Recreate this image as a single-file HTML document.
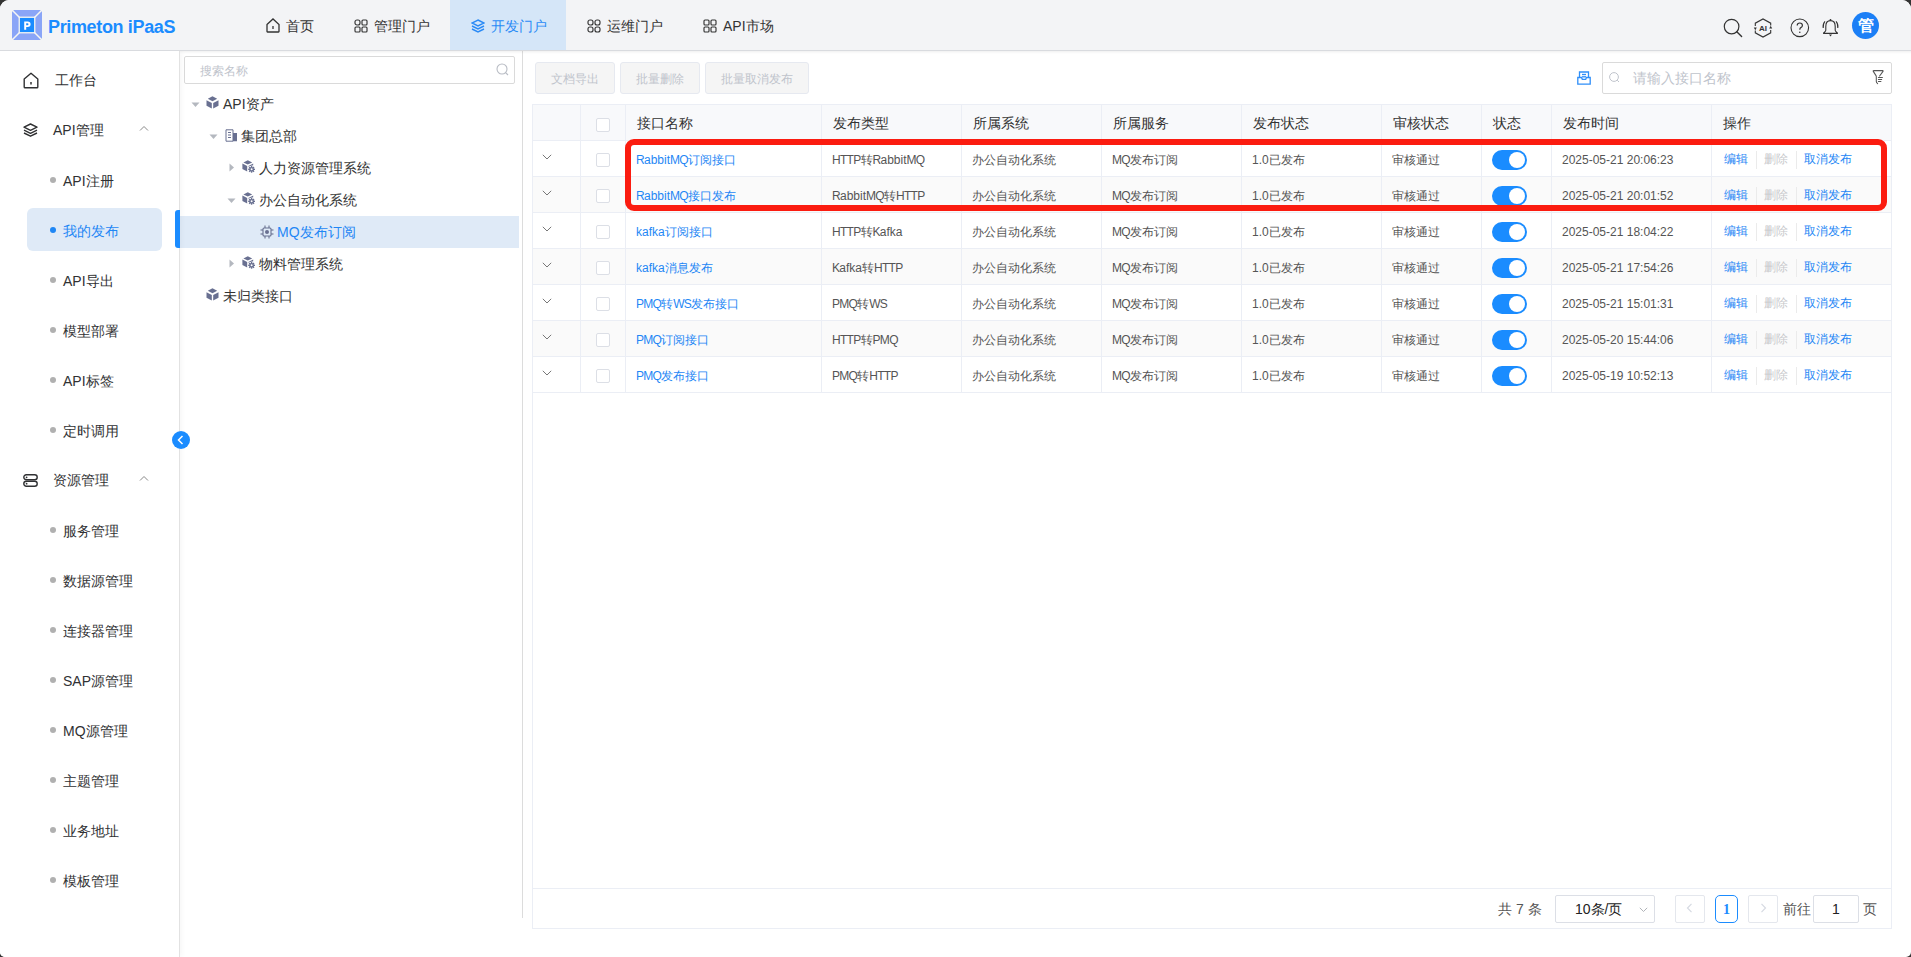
<!DOCTYPE html>
<html><head><meta charset="utf-8">
<style>
*{box-sizing:border-box;margin:0;padding:0}
html,body{width:1911px;height:957px;overflow:hidden;background:#333}
body{font-family:"Liberation Sans",sans-serif;color:#303133;position:relative}
.app{position:absolute;left:0;top:0;width:1911px;height:957px;background:#fff;border-radius:9px 9px 5px 5px;overflow:hidden}
.abs{position:absolute}
.hdr{position:absolute;left:0;top:0;width:1911px;height:51px;background:#f3f4f6;border-bottom:1px solid #d9dbdf;box-shadow:0 1px 3px rgba(0,0,0,0.06);z-index:3;box-shadow:none}
.logo{position:absolute;left:12px;top:10px;width:30px;height:30px}
.brand{position:absolute;left:48px;top:17px;font-size:18px;line-height:20px;font-weight:bold;color:#1b8cff;letter-spacing:-0.35px}
.nav{position:absolute;top:0;height:50px;display:flex;align-items:center;font-size:14px;color:#333;padding-top:3px}
.nav svg{margin-right:6px;position:relative;top:-1px}
.nav.active{background:#d5e6f8;color:#2b8bf6}
.ticon{position:absolute}
.side{position:absolute;left:0;top:51px;width:180px;height:906px;border-right:1px solid #e2e2e2;background:#fff;box-shadow:2px 0 5px rgba(0,0,0,0.035);z-index:2}
.sitem{position:absolute;left:0;width:180px;height:20px;font-size:14px;color:#303133;line-height:20px}
.dot{position:absolute;left:50px;top:7px;width:6px;height:6px;border-radius:50%;background:#b0b0b0}
.tree{position:absolute;left:180px;top:51px;width:343px;height:867px;border-right:1px solid #dcdcdc}
.titem{position:absolute;left:0;height:32px;width:339px;font-size:14px;color:#333;line-height:32px}
.main{position:absolute;left:523px;top:51px;right:0;bottom:0}
.btn{position:absolute;top:11px;height:32px;border:1px solid #e6e9f0;background:#f5f5f5;border-radius:3px;font-size:12px;color:#c0c4cc;line-height:30px;padding-top:1px;text-align:center}
table{border-collapse:collapse;table-layout:fixed;position:absolute;left:532px;top:104px}
td,th{border:1px solid #ebeef5;height:36px;font-size:12px;color:#555;text-align:left;padding:3px 0 0 10px;font-weight:normal;white-space:nowrap}
th{background:#f8f9fb;font-size:14px;color:#333;padding-left:11px}
tr.g td{background:#fafafa}
.lnk{color:#1f87f5}
.cb{display:inline-block;width:14px;height:14px;border:1px solid #dcdfe6;border-radius:2px;background:#fff;vertical-align:middle}
.sw{display:inline-block;width:35px;height:20px;border-radius:10px;background:#1a8cff;position:relative;vertical-align:middle;top:0px}
.sw:after{content:"";position:absolute;right:2px;top:2px;width:16px;height:16px;border-radius:50%;background:#fff}
.ops span{display:inline-block}
i.uc{font-style:normal;letter-spacing:-0.7px}
.sep{display:inline-block;width:1px;height:18px;background:#ebebeb;vertical-align:middle;margin:0 7px 0 8px}
</style></head><body>
<div class="app">
<!-- HEADER -->
<div class="hdr">
  <svg class="logo" viewBox="0 0 30 30"><rect x="0" y="0" width="30" height="30" rx="2.2" fill="#8aa5f7"/><g stroke="#f6f6f2" stroke-width="1.5"><line x1="-1" y1="-1" x2="8" y2="8"/><line x1="31" y1="-1" x2="22" y2="8"/><line x1="-1" y1="31" x2="8" y2="22"/><line x1="31" y1="31" x2="22" y2="22"/></g><rect x="6.6" y="6.6" width="16.8" height="16.8" fill="#f6f6f2"/><rect x="7.9" y="7.9" width="14.2" height="14.2" fill="#1a8cff"/><path d="M12.2 19.8 V11.6 H15.6 Q18.6 11.6 18.6 14.3 Q18.6 17 15.6 17 H14.2 V19.8 Z M14.2 13.3 V15.3 H15.3 Q16.5 15.3 16.5 14.3 Q16.5 13.3 15.3 13.3 Z" fill="#fff" fill-rule="evenodd"/></svg>
  <div class="brand">Primeton iPaaS</div>
  <div class="nav" style="left:246px;width:88px;padding-left:20px">
    <svg width="14" height="15" viewBox="0 0 14 15"><path d="M1 6.5 L7 1 L13 6.5 V13.5 Q13 14 12.5 14 H1.5 Q1 14 1 13.5 Z" fill="none" stroke="#333" stroke-width="1.3"/><line x1="7" y1="8" x2="7" y2="11" stroke="#333" stroke-width="1.3"/></svg>首页</div>
  <div class="nav" style="left:334px;width:116px;padding-left:20px">
    <svg width="14" height="14" viewBox="0 0 14 14"><g fill="none" stroke="#333" stroke-width="1.15"><rect x="1" y="1" width="5" height="5" rx="2"/><rect x="8" y="1" width="5" height="5" rx="1"/><rect x="1" y="8" width="5" height="5" rx="1"/><rect x="8" y="8" width="5" height="5" rx="1"/></g></svg>管理门户</div>
  <div class="nav active" style="left:450px;width:116px;padding-left:21px">
    <svg width="14" height="14" viewBox="0 0 14 14"><g fill="none" stroke="#2b8bf6" stroke-width="1.4"><path d="M7 1 L13 4 L7 7 L1 4 Z"/><path d="M1 7 L7 10 L13 7"/><path d="M1 10 L7 13 L13 10"/></g></svg>开发门户</div>
  <div class="nav" style="left:567px;width:116px;padding-left:20px">
    <svg width="14" height="14" viewBox="0 0 14 14"><g fill="none" stroke="#333" stroke-width="1.15"><rect x="1" y="1" width="5" height="5" rx="2"/><rect x="8" y="1" width="5" height="5" rx="2"/><rect x="1" y="8" width="5" height="5" rx="2"/><rect x="8" y="8" width="5" height="5" rx="2"/></g></svg>运维门户</div>
  <div class="nav" style="left:683px;width:110px;padding-left:20px">
    <svg width="14" height="14" viewBox="0 0 14 14"><g fill="none" stroke="#333" stroke-width="1.15"><rect x="1" y="1" width="5" height="5" rx="1"/><rect x="8" y="1" width="5" height="5" rx="1"/><rect x="1" y="8" width="5" height="5" rx="1"/><rect x="8" y="8" width="5" height="5" rx="1"/></g></svg>API市场</div>
  <!-- right icons -->
  <svg class="ticon" style="left:1723px;top:18px" width="20" height="20" viewBox="0 0 20 20"><circle cx="8.6" cy="8.6" r="7.3" fill="none" stroke="#333" stroke-width="1.2"/><line x1="13.8" y1="13.8" x2="18.6" y2="18.6" stroke="#333" stroke-width="1.4" stroke-linecap="round"/></svg>
  <svg class="ticon" style="left:1753px;top:18px" width="20" height="20" viewBox="0 0 20 20"><g fill="none" stroke="#333" stroke-width="1.1"><path d="M2.3 8 V5.2 L10 1 L17.7 5.2 V7.5"/><path d="M17.7 12 V14.8 L10 19 L2.3 14.8 V12.5"/></g><path d="M0.8 9.5 L2.3 12.3 L3.8 9.5 Z" fill="#333"/><path d="M16.2 10.5 L17.7 7.7 L19.2 10.5 Z" fill="#333"/><text x="10" y="12.6" font-size="8" font-weight="bold" text-anchor="middle" fill="#333" font-family="Liberation Sans">AI</text></svg>
  <svg class="ticon" style="left:1790px;top:18px" width="20" height="20" viewBox="0 0 20 20"><circle cx="9.8" cy="9.8" r="8.8" fill="none" stroke="#333" stroke-width="1.1"/><path d="M7.2 7.6 Q7.2 5 9.8 5 Q12.4 5 12.4 7.4 Q12.4 8.8 10.8 9.6 Q9.8 10.1 9.8 11.8" fill="none" stroke="#333" stroke-width="1.2"/><circle cx="9.8" cy="14.3" r="0.8" fill="#333"/></svg>
  <svg class="ticon" style="left:1821px;top:18px" width="19" height="20" viewBox="0 0 19 20"><g fill="none" stroke="#333" stroke-width="1.1" stroke-linejoin="round"><path d="M9.5 2.6 C6.3 2.6 4.8 5.4 4.8 8.4 V12.3 C4.8 13.4 3.6 14 2.6 15 V15.4 H16.4 V15 C15.4 14 14.2 13.4 14.2 12.3 V8.4 C14.2 5.4 12.7 2.6 9.5 2.6 Z"/><path d="M2.2 10 Q1.6 6 4 3.4"/><path d="M16.8 10 Q17.4 6 15 3.4"/></g><circle cx="9.5" cy="1.8" r="0.9" fill="#333"/><path d="M8 16.6 H11 L9.5 18.4 Z" fill="#333"/></svg>
  <div class="abs" style="left:1852px;top:12px;width:27px;height:27px;border-radius:50%;background:#1b7ff6;color:#fff;font-size:16px;font-weight:bold;text-align:center;line-height:27px">管</div>
</div>

<div class="abs" style="left:180px;top:51px;width:1731px;height:3px;background:linear-gradient(rgba(0,0,0,0.05),rgba(0,0,0,0));z-index:1"></div>
<!-- SIDEBAR -->
<div class="side">
<div class="abs" style="left:27px;top:157px;width:135px;height:43px;border-radius:6px;background:#dfeaf7"></div>
<div class="sitem" style="top:19px"><svg class="abs" style="left:23px;top:2px" width="16" height="17" viewBox="0 0 16 17"><path d="M1.2 7 L8 1.2 L14.8 7 V15 Q14.8 15.8 14 15.8 H2 Q1.2 15.8 1.2 15 Z" fill="none" stroke="#303133" stroke-width="1.4" stroke-linejoin="round"/><line x1="8" y1="10" x2="8" y2="12.5" stroke="#303133" stroke-width="1.5"/></svg><span class="abs" style="left:55px;top:0">工作台</span></div>
<div class="sitem" style="top:69px"><svg class="abs" style="left:23px;top:3px" width="15" height="14" viewBox="0 0 15 14"><g fill="none" stroke="#303133" stroke-width="1.4" stroke-linejoin="round"><path d="M7.5 1 L14 4.2 L7.5 7.4 L1 4.2 Z"/><path d="M1 7.2 L7.5 10.4 L14 7.2"/><path d="M1 10 L7.5 13.2 L14 10"/></g></svg><span class="abs" style="left:53px;top:0">API管理</span><svg class="abs" style="left:139px;top:5px" width="10" height="7" viewBox="0 0 10 7"><path d="M1 5.5 L5 1.5 L9 5.5" fill="none" stroke="#888" stroke-width="1"/></svg></div>
<div class="sitem" style="top:119px;"><div class="dot"></div><span class="abs" style="left:63px;top:1px">API注册</span></div>
<div class="sitem" style="top:169px;color:#1f87f5;"><div class="dot" style="background:#1f87f5"></div><span class="abs" style="left:63px;top:1px">我的发布</span></div>
<div class="sitem" style="top:219px;"><div class="dot"></div><span class="abs" style="left:63px;top:1px">API导出</span></div>
<div class="sitem" style="top:269px;"><div class="dot"></div><span class="abs" style="left:63px;top:1px">模型部署</span></div>
<div class="sitem" style="top:319px;"><div class="dot"></div><span class="abs" style="left:63px;top:1px">API标签</span></div>
<div class="sitem" style="top:369px;"><div class="dot"></div><span class="abs" style="left:63px;top:1px">定时调用</span></div>
<div class="sitem" style="top:419px"><svg class="abs" style="left:23px;top:4px" width="15" height="13" viewBox="0 0 15 13"><g fill="none" stroke="#303133" stroke-width="1.4"><rect x="0.8" y="0.8" width="13.4" height="5" rx="2.5"/><rect x="0.8" y="7.2" width="13.4" height="5" rx="2.5"/></g><circle cx="3.6" cy="3.3" r="0.9" fill="#303133"/><circle cx="3.6" cy="9.7" r="0.9" fill="#303133"/></svg><span class="abs" style="left:53px;top:0">资源管理</span><svg class="abs" style="left:139px;top:5px" width="10" height="7" viewBox="0 0 10 7"><path d="M1 5.5 L5 1.5 L9 5.5" fill="none" stroke="#888" stroke-width="1"/></svg></div>
<div class="sitem" style="top:469px;"><div class="dot"></div><span class="abs" style="left:63px;top:1px">服务管理</span></div>
<div class="sitem" style="top:519px;"><div class="dot"></div><span class="abs" style="left:63px;top:1px">数据源管理</span></div>
<div class="sitem" style="top:569px;"><div class="dot"></div><span class="abs" style="left:63px;top:1px">连接器管理</span></div>
<div class="sitem" style="top:619px;"><div class="dot"></div><span class="abs" style="left:63px;top:1px">SAP源管理</span></div>
<div class="sitem" style="top:669px;"><div class="dot"></div><span class="abs" style="left:63px;top:1px">MQ源管理</span></div>
<div class="sitem" style="top:719px;"><div class="dot"></div><span class="abs" style="left:63px;top:1px">主题管理</span></div>
<div class="sitem" style="top:769px;"><div class="dot"></div><span class="abs" style="left:63px;top:1px">业务地址</span></div>
<div class="sitem" style="top:819px;"><div class="dot"></div><span class="abs" style="left:63px;top:1px">模板管理</span></div>
<div class="abs" style="left:172px;top:380px;width:18px;height:18px;border-radius:50%;background:#1b8cff;z-index:5"><svg width="18" height="18" viewBox="0 0 18 18"><path d="M10.5 5 L6.5 9 L10.5 13" fill="none" stroke="#fff" stroke-width="1.5"/></svg></div>
</div>

<!-- TREE -->
<div class="tree">
<div class="abs" style="left:4px;top:5px;width:331px;height:28px;border:1px solid #dadada;border-radius:2px;background:#fff"><span class="abs" style="left:15px;top:6px;font-size:12px;color:#c0c4cc;line-height:16px">搜索名称</span><svg class="abs" style="left:311px;top:6px" width="13" height="13" viewBox="0 0 13 13"><circle cx="6" cy="6" r="5" fill="none" stroke="#b8bcc4" stroke-width="1.1"/><line x1="9.6" y1="9.6" x2="12" y2="12" stroke="#b8bcc4" stroke-width="1.1"/></svg></div>
<div class="titem" style="top:37px;"><svg class="abs" style="left:11px;top:14px" width="9" height="6" viewBox="0 0 9 6"><path d="M0.5 0.5 H8.5 L4.5 5 Z" fill="#b4b8bf"/></svg><svg class="abs" style="left:26px;top:8px" width="13" height="13" viewBox="0 0 13 13"><path d="M6.5 0.3 L11.2 2.8 L6.5 5.3 L1.8 2.8 Z" fill="#697091"/><path d="M0.5 4.2 L5.8 7 V12.6 L0.5 9.8 Z" fill="#697091"/><path d="M12.5 4.2 L7.2 7 V12.6 L12.5 9.8 Z" fill="#697091"/></svg><span class="abs" style="left:43px;top:0">API资产</span></div>
<div class="titem" style="top:69px;"><svg class="abs" style="left:29px;top:14px" width="9" height="6" viewBox="0 0 9 6"><path d="M0.5 0.5 H8.5 L4.5 5 Z" fill="#b4b8bf"/></svg><svg class="abs" style="left:45px;top:9px" width="13" height="13" viewBox="0 0 13 13"><path d="M1 0.8 H8 V12.2 H1 Z" fill="none" stroke="#697091" stroke-width="1"/><path d="M8 4 H12 V12.2 H8" fill="#697091"/><line x1="3" y1="3.5" x2="6" y2="3.5" stroke="#697091" stroke-width="1.1"/><line x1="3" y1="6" x2="6" y2="6" stroke="#697091" stroke-width="1.1"/><line x1="3" y1="8.5" x2="6" y2="8.5" stroke="#697091" stroke-width="1.1"/></svg><span class="abs" style="left:61px;top:0">集团总部</span></div>
<div class="titem" style="top:101px;"><svg class="abs" style="left:49px;top:11px" width="6" height="9" viewBox="0 0 6 9"><path d="M0.5 0.5 V8.5 L5 4.5 Z" fill="#b4b8bf"/></svg><svg class="abs" style="left:62px;top:8px" width="13" height="13" viewBox="0 0 13 13"><path d="M5.8 0.2 L10.2 2.4 L5.8 4.6 L1.4 2.4 Z" fill="#697091"/><path d="M0.4 3.5 L5.2 5.9 V11.4 L0.4 9 Z" fill="#697091"/><path d="M11.2 3.5 L6.4 5.9 V6.8 L11.2 5.2 Z" fill="#697091"/><circle cx="9.6" cy="9.3" r="3.6" fill="#fff"/><circle cx="9.6" cy="9.3" r="2.4" fill="#697091"/><rect x="8.90" y="5.90" width="1.4" height="1.6" transform="rotate(0 9.6 9.3)" fill="#697091"/><rect x="8.90" y="5.90" width="1.4" height="1.6" transform="rotate(45 9.6 9.3)" fill="#697091"/><rect x="8.90" y="5.90" width="1.4" height="1.6" transform="rotate(90 9.6 9.3)" fill="#697091"/><rect x="8.90" y="5.90" width="1.4" height="1.6" transform="rotate(135 9.6 9.3)" fill="#697091"/><rect x="8.90" y="5.90" width="1.4" height="1.6" transform="rotate(180 9.6 9.3)" fill="#697091"/><rect x="8.90" y="5.90" width="1.4" height="1.6" transform="rotate(225 9.6 9.3)" fill="#697091"/><rect x="8.90" y="5.90" width="1.4" height="1.6" transform="rotate(270 9.6 9.3)" fill="#697091"/><rect x="8.90" y="5.90" width="1.4" height="1.6" transform="rotate(315 9.6 9.3)" fill="#697091"/><circle cx="9.6" cy="9.3" r="1" fill="#fff"/></svg><span class="abs" style="left:79px;top:0">人力资源管理系统</span></div>
<div class="titem" style="top:133px;"><svg class="abs" style="left:47px;top:14px" width="9" height="6" viewBox="0 0 9 6"><path d="M0.5 0.5 H8.5 L4.5 5 Z" fill="#b4b8bf"/></svg><svg class="abs" style="left:62px;top:8px" width="13" height="13" viewBox="0 0 13 13"><path d="M5.8 0.2 L10.2 2.4 L5.8 4.6 L1.4 2.4 Z" fill="#697091"/><path d="M0.4 3.5 L5.2 5.9 V11.4 L0.4 9 Z" fill="#697091"/><path d="M11.2 3.5 L6.4 5.9 V6.8 L11.2 5.2 Z" fill="#697091"/><circle cx="9.6" cy="9.3" r="3.6" fill="#fff"/><circle cx="9.6" cy="9.3" r="2.4" fill="#697091"/><rect x="8.90" y="5.90" width="1.4" height="1.6" transform="rotate(0 9.6 9.3)" fill="#697091"/><rect x="8.90" y="5.90" width="1.4" height="1.6" transform="rotate(45 9.6 9.3)" fill="#697091"/><rect x="8.90" y="5.90" width="1.4" height="1.6" transform="rotate(90 9.6 9.3)" fill="#697091"/><rect x="8.90" y="5.90" width="1.4" height="1.6" transform="rotate(135 9.6 9.3)" fill="#697091"/><rect x="8.90" y="5.90" width="1.4" height="1.6" transform="rotate(180 9.6 9.3)" fill="#697091"/><rect x="8.90" y="5.90" width="1.4" height="1.6" transform="rotate(225 9.6 9.3)" fill="#697091"/><rect x="8.90" y="5.90" width="1.4" height="1.6" transform="rotate(270 9.6 9.3)" fill="#697091"/><rect x="8.90" y="5.90" width="1.4" height="1.6" transform="rotate(315 9.6 9.3)" fill="#697091"/><circle cx="9.6" cy="9.3" r="1" fill="#fff"/></svg><span class="abs" style="left:79px;top:0">办公自动化系统</span></div>
<div class="abs" style="left:0;top:165px;width:339px;height:32px;background:#dfeaf7"></div>
<div class="abs" style="left:-5px;top:159px;width:5px;height:38px;border-radius:3px 0 0 3px;background:#1b8cff;z-index:6"></div>
<div class="titem" style="top:165px;color:#1f87f5;"><svg class="abs" style="left:80px;top:9px" width="14" height="14" viewBox="0 0 14 14"><g stroke="#697091" stroke-width="1.1" fill="none"><rect x="3" y="3" width="8" height="8" rx="1"/><line x1="5" y1="0.5" x2="5" y2="3"/><line x1="9" y1="0.5" x2="9" y2="3"/><line x1="5" y1="11" x2="5" y2="13.5"/><line x1="9" y1="11" x2="9" y2="13.5"/><line x1="0.5" y1="5" x2="3" y2="5"/><line x1="0.5" y1="9" x2="3" y2="9"/><line x1="11" y1="5" x2="13.5" y2="5"/><line x1="11" y1="9" x2="13.5" y2="9"/></g><circle cx="7" cy="7" r="2" fill="#697091"/></svg><span class="abs" style="left:97px;top:0">MQ发布订阅</span></div>
<div class="titem" style="top:197px;"><svg class="abs" style="left:49px;top:11px" width="6" height="9" viewBox="0 0 6 9"><path d="M0.5 0.5 V8.5 L5 4.5 Z" fill="#b4b8bf"/></svg><svg class="abs" style="left:62px;top:8px" width="13" height="13" viewBox="0 0 13 13"><path d="M5.8 0.2 L10.2 2.4 L5.8 4.6 L1.4 2.4 Z" fill="#697091"/><path d="M0.4 3.5 L5.2 5.9 V11.4 L0.4 9 Z" fill="#697091"/><path d="M11.2 3.5 L6.4 5.9 V6.8 L11.2 5.2 Z" fill="#697091"/><circle cx="9.6" cy="9.3" r="3.6" fill="#fff"/><circle cx="9.6" cy="9.3" r="2.4" fill="#697091"/><rect x="8.90" y="5.90" width="1.4" height="1.6" transform="rotate(0 9.6 9.3)" fill="#697091"/><rect x="8.90" y="5.90" width="1.4" height="1.6" transform="rotate(45 9.6 9.3)" fill="#697091"/><rect x="8.90" y="5.90" width="1.4" height="1.6" transform="rotate(90 9.6 9.3)" fill="#697091"/><rect x="8.90" y="5.90" width="1.4" height="1.6" transform="rotate(135 9.6 9.3)" fill="#697091"/><rect x="8.90" y="5.90" width="1.4" height="1.6" transform="rotate(180 9.6 9.3)" fill="#697091"/><rect x="8.90" y="5.90" width="1.4" height="1.6" transform="rotate(225 9.6 9.3)" fill="#697091"/><rect x="8.90" y="5.90" width="1.4" height="1.6" transform="rotate(270 9.6 9.3)" fill="#697091"/><rect x="8.90" y="5.90" width="1.4" height="1.6" transform="rotate(315 9.6 9.3)" fill="#697091"/><circle cx="9.6" cy="9.3" r="1" fill="#fff"/></svg><span class="abs" style="left:79px;top:0">物料管理系统</span></div>
<div class="titem" style="top:229px;"><svg class="abs" style="left:26px;top:8px" width="13" height="13" viewBox="0 0 13 13"><path d="M6.5 0.3 L11.2 2.8 L6.5 5.3 L1.8 2.8 Z" fill="#697091"/><path d="M0.5 4.2 L5.8 7 V12.6 L0.5 9.8 Z" fill="#697091"/><path d="M12.5 4.2 L7.2 7 V12.6 L12.5 9.8 Z" fill="#697091"/></svg><span class="abs" style="left:43px;top:0">未归类接口</span></div>
</div>

<!-- MAIN -->
<div class="abs" style="left:532px;top:104px;width:1360px;height:825px;border:1px solid #ebeef5;border-top:none"></div><div class="abs" style="left:533px;top:888px;width:1358px;height:1px;background:#ebeef5"></div>
<table><colgroup><col style="width:48px"><col style="width:45px"><col style="width:196px"><col style="width:140px"><col style="width:140px"><col style="width:140px"><col style="width:140px"><col style="width:100px"><col style="width:70px"><col style="width:160px"><col style="width:180px"></colgroup><tr><th></th><th style="padding-left:15px"><span class="cb"></span></th><th>接口名称</th><th>发布类型</th><th>所属系统</th><th>所属服务</th><th>发布状态</th><th>审核状态</th><th>状态</th><th>发布时间</th><th>操作</th></tr><tr><td><svg width="10" height="6" viewBox="0 0 10 6" style="vertical-align:top;margin-top:1px;margin-left:-1px"><path d="M0.8 0.8 L5 5 L9.2 0.8" fill="none" stroke="#777" stroke-width="1"/></svg></td><td style="padding-left:15px"><span class="cb"></span></td><td class="lnk" style="color:#1f87f5"><i class="uc">R</i>abbit<i class="uc">MQ</i>订阅接口</td><td><i class="uc">HTTP</i>转<i class="uc">R</i>abbit<i class="uc">MQ</i></td><td>办公自动化系统</td><td><i class="uc">MQ</i>发布订阅</td><td>1.0已发布</td><td>审核通过</td><td><span class="sw"></span></td><td>2025-05-21 20:06:23</td><td class="ops" style="padding-left:12px"><span style="color:#1f87f5">编辑</span><span class="sep"></span><span style="color:#c8c9cc">删除</span><span class="sep"></span><span style="color:#1f87f5">取消发布</span></td></tr><tr class="g"><td><svg width="10" height="6" viewBox="0 0 10 6" style="vertical-align:top;margin-top:1px;margin-left:-1px"><path d="M0.8 0.8 L5 5 L9.2 0.8" fill="none" stroke="#777" stroke-width="1"/></svg></td><td style="padding-left:15px"><span class="cb"></span></td><td class="lnk" style="color:#1f87f5"><i class="uc">R</i>abbit<i class="uc">MQ</i>接口发布</td><td><i class="uc">R</i>abbit<i class="uc">MQ</i>转<i class="uc">HTTP</i></td><td>办公自动化系统</td><td><i class="uc">MQ</i>发布订阅</td><td>1.0已发布</td><td>审核通过</td><td><span class="sw"></span></td><td>2025-05-21 20:01:52</td><td class="ops" style="padding-left:12px"><span style="color:#1f87f5">编辑</span><span class="sep"></span><span style="color:#c8c9cc">删除</span><span class="sep"></span><span style="color:#1f87f5">取消发布</span></td></tr><tr><td><svg width="10" height="6" viewBox="0 0 10 6" style="vertical-align:top;margin-top:1px;margin-left:-1px"><path d="M0.8 0.8 L5 5 L9.2 0.8" fill="none" stroke="#777" stroke-width="1"/></svg></td><td style="padding-left:15px"><span class="cb"></span></td><td class="lnk" style="color:#1f87f5">kafka订阅接口</td><td><i class="uc">HTTP</i>转<i class="uc">K</i>afka</td><td>办公自动化系统</td><td><i class="uc">MQ</i>发布订阅</td><td>1.0已发布</td><td>审核通过</td><td><span class="sw"></span></td><td>2025-05-21 18:04:22</td><td class="ops" style="padding-left:12px"><span style="color:#1f87f5">编辑</span><span class="sep"></span><span style="color:#c8c9cc">删除</span><span class="sep"></span><span style="color:#1f87f5">取消发布</span></td></tr><tr class="g"><td><svg width="10" height="6" viewBox="0 0 10 6" style="vertical-align:top;margin-top:1px;margin-left:-1px"><path d="M0.8 0.8 L5 5 L9.2 0.8" fill="none" stroke="#777" stroke-width="1"/></svg></td><td style="padding-left:15px"><span class="cb"></span></td><td class="lnk" style="color:#1f87f5">kafka消息发布</td><td><i class="uc">K</i>afka转<i class="uc">HTTP</i></td><td>办公自动化系统</td><td><i class="uc">MQ</i>发布订阅</td><td>1.0已发布</td><td>审核通过</td><td><span class="sw"></span></td><td>2025-05-21 17:54:26</td><td class="ops" style="padding-left:12px"><span style="color:#1f87f5">编辑</span><span class="sep"></span><span style="color:#c8c9cc">删除</span><span class="sep"></span><span style="color:#1f87f5">取消发布</span></td></tr><tr><td><svg width="10" height="6" viewBox="0 0 10 6" style="vertical-align:top;margin-top:1px;margin-left:-1px"><path d="M0.8 0.8 L5 5 L9.2 0.8" fill="none" stroke="#777" stroke-width="1"/></svg></td><td style="padding-left:15px"><span class="cb"></span></td><td class="lnk" style="color:#1f87f5"><i class="uc">PMQ</i>转<i class="uc">WS</i>发布接口</td><td><i class="uc">PMQ</i>转<i class="uc">WS</i></td><td>办公自动化系统</td><td><i class="uc">MQ</i>发布订阅</td><td>1.0已发布</td><td>审核通过</td><td><span class="sw"></span></td><td>2025-05-21 15:01:31</td><td class="ops" style="padding-left:12px"><span style="color:#1f87f5">编辑</span><span class="sep"></span><span style="color:#c8c9cc">删除</span><span class="sep"></span><span style="color:#1f87f5">取消发布</span></td></tr><tr class="g"><td><svg width="10" height="6" viewBox="0 0 10 6" style="vertical-align:top;margin-top:1px;margin-left:-1px"><path d="M0.8 0.8 L5 5 L9.2 0.8" fill="none" stroke="#777" stroke-width="1"/></svg></td><td style="padding-left:15px"><span class="cb"></span></td><td class="lnk" style="color:#1f87f5"><i class="uc">PMQ</i>订阅接口</td><td><i class="uc">HTTP</i>转<i class="uc">PMQ</i></td><td>办公自动化系统</td><td><i class="uc">MQ</i>发布订阅</td><td>1.0已发布</td><td>审核通过</td><td><span class="sw"></span></td><td>2025-05-20 15:44:06</td><td class="ops" style="padding-left:12px"><span style="color:#1f87f5">编辑</span><span class="sep"></span><span style="color:#c8c9cc">删除</span><span class="sep"></span><span style="color:#1f87f5">取消发布</span></td></tr><tr><td><svg width="10" height="6" viewBox="0 0 10 6" style="vertical-align:top;margin-top:1px;margin-left:-1px"><path d="M0.8 0.8 L5 5 L9.2 0.8" fill="none" stroke="#777" stroke-width="1"/></svg></td><td style="padding-left:15px"><span class="cb"></span></td><td class="lnk" style="color:#1f87f5"><i class="uc">PMQ</i>发布接口</td><td><i class="uc">PMQ</i>转<i class="uc">HTTP</i></td><td>办公自动化系统</td><td><i class="uc">MQ</i>发布订阅</td><td>1.0已发布</td><td>审核通过</td><td><span class="sw"></span></td><td>2025-05-19 10:52:13</td><td class="ops" style="padding-left:12px"><span style="color:#1f87f5">编辑</span><span class="sep"></span><span style="color:#c8c9cc">删除</span><span class="sep"></span><span style="color:#1f87f5">取消发布</span></td></tr></table>
<div class="abs" style="left:1498px;top:901px;font-size:14px;color:#555;line-height:16px">共 7 条</div>
<div class="abs" style="left:1555px;top:895px;width:100px;height:28px;border:1px solid #dcdfe6;border-radius:2px"><span class="abs" style="left:19px;top:5px;font-size:14px;color:#222;line-height:16px">10条/页</span><svg class="abs" style="left:83px;top:11px" width="9" height="6" viewBox="0 0 9 6"><path d="M0.8 0.8 L4.5 4.5 L8.2 0.8" fill="none" stroke="#b0b3b8" stroke-width="1"/></svg></div>
<div class="abs" style="left:1675px;top:895px;width:30px;height:28px;border:1px solid #e4e7ed;border-radius:2px"><svg class="abs" style="left:10px;top:7px" width="7" height="10" viewBox="0 0 7 10"><path d="M5.5 0.8 L1.5 5 L5.5 9.2" fill="none" stroke="#d6dae2" stroke-width="1.2"/></svg></div>
<div class="abs" style="left:1715px;top:895px;width:23px;height:28px;border:1px solid #1b8cff;border-radius:5px;color:#1b8cff;font-weight:bold;font-size:14px;font-family:'Liberation Serif',serif;text-align:center;line-height:28px">1</div>
<div class="abs" style="left:1748px;top:895px;width:30px;height:28px;border:1px solid #e4e7ed;border-radius:2px"><svg class="abs" style="left:11px;top:7px" width="7" height="10" viewBox="0 0 7 10"><path d="M1.5 0.8 L5.5 5 L1.5 9.2" fill="none" stroke="#d6dae2" stroke-width="1.2"/></svg></div>
<div class="abs" style="left:1783px;top:901px;font-size:14px;color:#555;line-height:16px">前往</div>
<div class="abs" style="left:1813px;top:895px;width:46px;height:28px;border:1px solid #dcdfe6;border-radius:2px;font-size:14px;color:#222;text-align:center;line-height:26px">1</div>
<div class="abs" style="left:1863px;top:901px;font-size:14px;color:#555;line-height:16px">页</div>
<div class="abs" style="left:625px;top:139px;width:1262px;height:72px;border:6px solid #fb1c10;border-radius:9px;z-index:10"></div>

<div class="main">
<div class="btn" style="left:12px;width:80px">文档导出</div>
<div class="btn" style="left:97px;width:80px">批量删除</div>
<div class="btn" style="left:182px;width:104px">批量取消发布</div>
<svg class="abs" style="left:1054px;top:20px" width="14" height="14" viewBox="0 0 14 14"><g fill="none" stroke="#2f8ef8" stroke-width="1.3"><path d="M2.5 7 V1 H11.5 V7"/><line x1="5" y1="3.5" x2="9" y2="3.5"/><line x1="5" y1="5.8" x2="9" y2="5.8"/><path d="M0.8 6.5 H4.5 L5.3 8.3 H8.7 L9.5 6.5 H13.2 V13.2 H0.8 Z"/></g></svg>
<div class="abs" style="left:1079px;top:11px;width:290px;height:32px;border:1px solid #dadada;border-radius:2px;background:#fff"><svg class="abs" style="left:6px;top:9px" width="12" height="12" viewBox="0 0 12 12"><circle cx="5" cy="5" r="4.4" fill="none" stroke="#c0c4cc" stroke-width="1"/><line x1="8.2" y1="8.2" x2="10" y2="10" stroke="#c0c4cc" stroke-width="1"/></svg><span class="abs" style="left:30px;top:7px;font-size:14px;color:#c0c4cc;line-height:16px">请输入接口名称</span><svg class="abs" style="left:269px;top:7px" width="13" height="15" viewBox="0 0 13 15"><g fill="none" stroke="#555" stroke-width="1.05" stroke-linecap="round" stroke-linejoin="round"><path d="M7.6 6 L11 1.4 Q11.5 0.6 10.6 0.6 H1.8 Q0.8 0.6 1.3 1.4 L4 5.6 Q4.3 6.1 4.3 6.8 V11.6 Q4.3 12.6 5.6 13.6"/><path d="M6.4 7.4 H10.4"/><path d="M6.4 9.4 H9.7"/><path d="M6.4 11.4 H8.9"/></g></svg></div>
</div>

</div>
</body></html>
